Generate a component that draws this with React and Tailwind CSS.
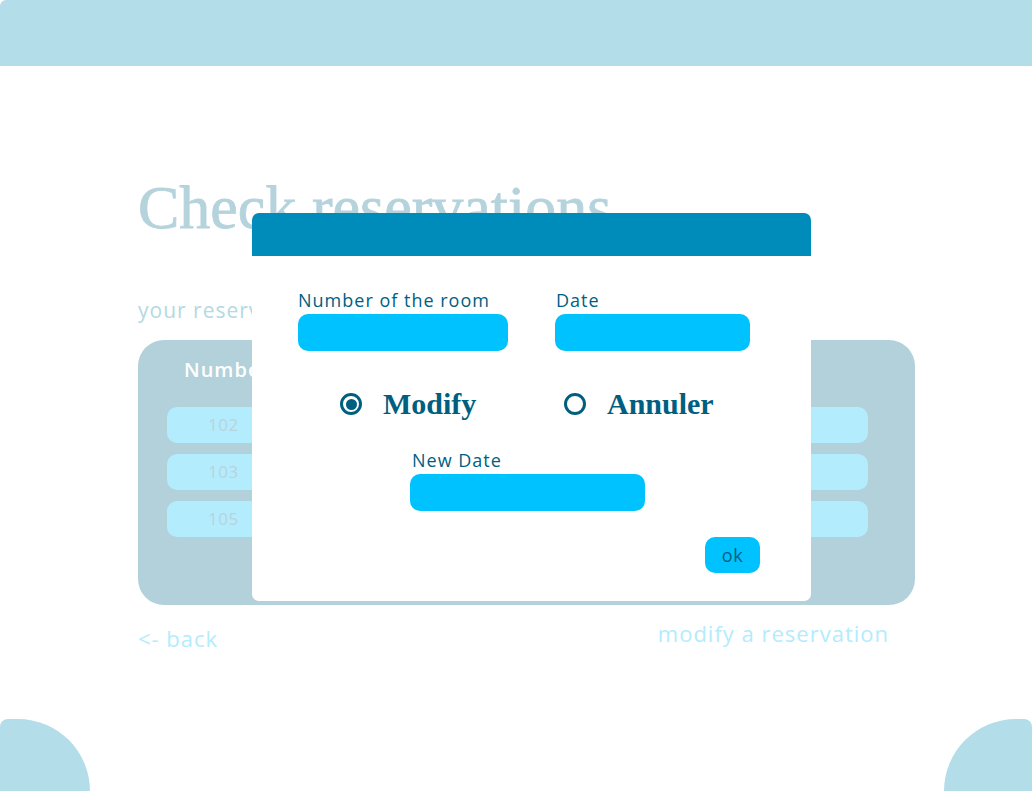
import { useState } from 'react';

const sans = { fontFamily: '"Open Sans", Lato, sans-serif' };
const serif = { fontFamily: '"Liberation Serif", "DejaVu Serif", serif' };

function Radio({ checked, label }) {
  return (
    <div className="flex items-center gap-[21px]">
      <span className="flex h-[22px] w-[22px] items-center justify-center rounded-full border-[3px] border-[#005f7f]">
        {checked && <span className="h-[11px] w-[11px] rounded-full bg-[#005f7f]" />}
      </span>
      <span className="text-[30px] font-semibold leading-none text-[#005f7f]" style={serif}>
        {label}
      </span>
    </div>
  );
}

export default function App() {
  const [choix, setChoix] = useState('modify');
  const rows = ['102', '103', '105'];

  return (
    <div className="relative h-[791px] w-[1032px] overflow-hidden bg-white" style={sans}>
      {/* bandeau du haut */}
      <div className="h-[66px] w-full rounded-tl-[6px] bg-[#b3dde9]" />

      {/* contenu en fond */}
      <div className="px-[138px] pt-[106px]">
        <h1 className="text-[62px] font-normal leading-[70px] text-[#b5d3dc] [-webkit-text-stroke:0.8px_#b5d3dc]" style={serif}>
          Check reservations
        </h1>
        <p className="mt-[54px] text-[21px] leading-[28px] tracking-[1px] text-[#b3d9e3]">your reservations</p>

        <div className="mt-[16px] h-[265px] w-[777px] rounded-[26px] bg-[#b3d1da] pl-[29px] pr-[47px] pt-[16px]">
          <div className="flex pl-[17px] text-[20px] font-semibold leading-[28px] tracking-[1px] text-white">
            <span>Number of the room</span>
          </div>
          <div className="mt-[23px] flex flex-col gap-[11px]">
            {rows.map((r) => (
              <div key={r} className="flex h-[36px] items-center rounded-[10px] bg-[#b3ecfd] pl-[41px] text-[17px] tracking-[0.5px] text-[#b9d3dc]">
                {r}
              </div>
            ))}
          </div>
        </div>

        <div className="mt-[14px] flex w-[751px] items-start justify-between text-[22px] leading-[28px] tracking-[1px] text-[#b3ecfd]">
          <span className="mt-[5px]">&lt;- back</span>
          <span>modify a reservation</span>
        </div>
      </div>

      {/* coins arrondis du bas */}
      <div className="absolute bottom-0 left-0 h-[72px] w-[90px] rounded-tl-[8px] rounded-tr-[72px] bg-[#b3dde9]" />
      <div className="absolute bottom-0 right-0 h-[72px] w-[88px] rounded-tr-[8px] rounded-tl-[72px] bg-[#b3dde9]" />

      {/* fenêtre modale */}
      <div className="absolute left-[252px] top-[213px] w-[559px] overflow-hidden rounded-[7px] bg-white">
        <div className="h-[43px] bg-[#008cba]" />
        <div className="px-[46px] pb-[28px] pt-[33px]">
          <div className="flex gap-[47px]">
            <div className="w-[210px]">
              <p className="text-[18px] leading-[22px] tracking-[1px] text-[#005f7f]">Number of the room</p>
              <div className="mt-[3px] h-[37px] rounded-[10px] bg-[#00c2ff]" />
            </div>
            <div className="w-[195px]">
              <p className="pl-[1px] text-[18px] leading-[22px] tracking-[1px] text-[#005f7f]">Date</p>
              <div className="mt-[3px] h-[37px] rounded-[10px] bg-[#00c2ff]" />
            </div>
          </div>

          <div className="ml-[42px] mt-[38px] flex">
            <button className="w-[224px] text-left" onClick={() => setChoix('modify')}>
              <Radio checked={choix === 'modify'} label="Modify" />
            </button>
            <button className="text-left" onClick={() => setChoix('annuler')}>
              <Radio checked={choix === 'annuler'} label="Annuler" />
            </button>
          </div>

          <div className="ml-[112px] mt-[30px] w-[235px]">
            <p className="pl-[2px] text-[18px] leading-[22px] tracking-[1px] text-[#005f7f]">New Date</p>
            <div className="mt-[3px] h-[37px] rounded-[10px] bg-[#00c2ff]" />
          </div>

          <div className="mt-[26px] flex justify-end pr-[5px]">
            <button className="h-[36px] w-[55px] rounded-[10px] bg-[#00c2ff] text-[18px] tracking-[0.5px] text-[#005f7f]">ok</button>
          </div>
        </div>
      </div>
    </div>
  );
}
